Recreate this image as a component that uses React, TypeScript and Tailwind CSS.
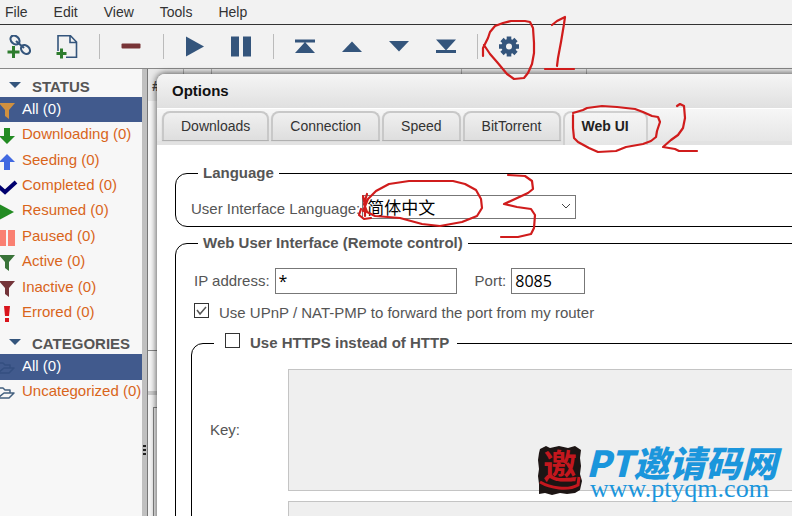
import type { ReactNode } from "react";

const NAVY = "#34557c";

function Glyph({ children }: { children: ReactNode }) {
  return (
    <svg viewBox="0 0 24 24" className="size-6" aria-hidden="true">
      {children}
    </svg>
  );
}

const toolGroups: { label: string; icon: ReactNode }[][] = [
  [
    {
      label: "Add torrent link",
      icon: (
        <Glyph>
          <g fill="none" stroke={NAVY} strokeWidth="2.2">
            <ellipse cx="8" cy="5" rx="5" ry="3.8" transform="rotate(45 8 5)" />
            <ellipse cx="18.5" cy="14.5" rx="5" ry="3.8" transform="rotate(45 18.5 14.5)" />
            <path d="M9 6l8 7" />
          </g>
          <path d="M0.5 17h12M6.5 11v12" stroke="#2e7d2e" strokeWidth="3" />
        </Glyph>
      ),
    },
    {
      label: "Add torrent file",
      icon: (
        <Glyph>
          <path d="M3 16V.8h12.500L21.500 7v15.200H11M15 1V7.500h6.500" fill="none" stroke={NAVY} strokeWidth="1.600" />
          <path d="M1.500 18.500h10M6.500 13.500v10" stroke="#2e7d2e" strokeWidth="3" />
        </Glyph>
      ),
    },
  ],
  [{ label: "Delete", icon: <Glyph><rect x="2.500" y="8.500" width="19" height="5" rx="1" fill="#783437" /></Glyph> }],
  [
    { label: "Resume", icon: <Glyph><path d="M3 1.500l18 10-18 10z" fill={NAVY} /></Glyph> },
    { label: "Pause", icon: <Glyph><path d="M2 1.500h8v20H2zM14 1.500h8v20h-8z" fill={NAVY} /></Glyph> },
  ],
  [
    { label: "Top", icon: <Glyph><path d="M2 4.500h20v3H2zM12 7l10 11H2z" fill={NAVY} /></Glyph> },
    { label: "Up", icon: <Glyph><path d="M12 6.500l10 10.500H2z" fill={NAVY} /></Glyph> },
    { label: "Down", icon: <Glyph><path d="M12 16.500l10-10.500H2z" fill={NAVY} /></Glyph> },
    { label: "Bottom", icon: <Glyph><path d="M2 4.500h20L12 15.500zM2 15h20v3H2z" fill={NAVY} /></Glyph> },
  ],
  [
    {
      label: "Options",
      icon: (
        <Glyph>
          <circle cx="12" cy="11.500" r="5.300" fill="none" stroke={NAVY} strokeWidth="4.600" />
          <path
            d="M12 1.500v4M12 17.500v4M2 11.500h4M18 11.500h4M5 4.500l3 3M16 15.500l3 3M5 18.500l3-3M16 7.500l3-3"
            stroke={NAVY}
            strokeWidth="4.600"
          />
        </Glyph>
      ),
    },
  ],
];

const groupClass = [
  "pl-[7px] pr-5 gap-6",
  "pl-[19px] pr-5",
  "pl-[19px] pr-5 gap-[22px]",
  "px-[19px] gap-[23px]",
  "px-[19px]",
];

const funnel = "M0 0h16l-6 7v9l-4-3V7z";

const statuses: { name: string; icon: ReactNode }[] = [
  { name: "All", icon: <path d={funnel} fill="#d0903f" /> },
  { name: "Downloading", icon: <path d="M5 0h6v8h5l-8 8-8-8h5z" fill="#228b22" /> },
  { name: "Seeding", icon: <path d="M5 16h6V8h5L8 0 0 8h5z" fill="#4169e1" /> },
  { name: "Completed", icon: <path d="M-1 7l7 6L17 3" fill="none" stroke="#00006e" strokeWidth="4" /> },
  { name: "Resumed", icon: <path d="M0 0l15 8-15 8z" fill="#228b22" /> },
  { name: "Paused", icon: <path d="M0 0h7v16H0zM9 0h7v16H9z" fill="#fa8072" /> },
  { name: "Active", icon: <path d={funnel} fill="#397339" /> },
  { name: "Inactive", icon: <path d={funnel} fill="#733439" /> },
  { name: "Errored", icon: <path d="M5 0h6l-1 10H6zM6 12h4v4H6z" fill="#d9141c" /> },
];

function folder(color: string) {
  return (
    <path
      d="M-3 13V3h7l2 2h5v3M-1 13h11l5-5H5l-6 5z"
      fill="none"
      stroke={color}
      strokeWidth="1.500"
      strokeLinejoin="round"
    />
  );
}

const categories = [
  { name: "All", icon: folder("#344f80") },
  { name: "Uncategorized", icon: folder("#43607f") },
];

function FilterList({ title, items, className }: {
  title: string;
  items: { name: string; icon: ReactNode }[];
  className: string;
}) {
  return (
    <section>
      <h2 className="flex h-7 items-center gap-[11px] pt-2 pl-[9px] font-bold text-[#555]">
        <svg viewBox="0 0 12 6" className="mb-1 h-[6px] w-3" aria-hidden="true">
          <path d="M0 0h12L6 6z" fill={NAVY} />
        </svg>
        {title}
      </h2>
      <ul className={`flex flex-col ${className}`}>
        {items.map((item, i) => (
          <li key={item.name} className={`flex flex-1 ${i === 0 ? "bg-[#415a8d] text-white" : "text-[#d9651b]"}`}>
            <a href="#" className="flex items-center gap-[7px] pb-[2px] whitespace-nowrap">
              <svg viewBox="1 0 15 16" className="mt-1 h-4 w-[15px] shrink-0 overflow-visible" aria-hidden="true">
                {item.icon}
              </svg>
              {item.name} (0)
            </a>
          </li>
        ))}
      </ul>
    </section>
  );
}

function Group({ legend, className, children }: { legend: ReactNode; className: string; children: ReactNode }) {
  return (
    <fieldset className={`rounded-xl border border-black ${className}`}>
      <legend className="flex items-center px-[5px] font-bold">{legend}</legend>
      {children}
    </fieldset>
  );
}

function OptionsWindow() {
  const tabs = ["Downloads", "Connection", "Speed", "BitTorrent", "Web UI"];
  return (
    <div
      role="dialog"
      aria-label="Options"
      className="absolute top-[5px] -right-16 -bottom-16 left-[157px] flex flex-col overflow-hidden rounded-tl-lg bg-white shadow-[0_0_6px_1px_rgba(0,0,0,0.6)]"
    >
      <h1 className="h-[34px] shrink-0 bg-linear-to-b from-[#f5f5f5] to-[#e0e0e0] pt-[6px] pl-[15px] leading-[22px] font-bold text-[#111]">
        Options
      </h1>
      <div
        role="tablist"
        className="flex h-[37px] shrink-0 items-start gap-[2px] border-t border-b-4 border-t-white border-b-[#e2e2e2] bg-linear-to-b from-[#f6f6f6] to-[#e6e6e6] pt-[2px] pl-[5px] text-sm text-[#333]"
      >
        {tabs.map((tab) => {
          const active = tab === "Web UI";
          return (
            <button
              key={tab}
              role="tab"
              aria-selected={active}
              className={`rounded-t-lg border-2 border-b-0 px-[17px] whitespace-nowrap ${
                active
                  ? "h-[34px] border-[#d0d0d0] bg-linear-to-b from-[#f5f5f5] to-[#e6e6e6] pb-[6px] font-bold text-[#222]"
                  : "h-[29px] border-[#c8c8c8] bg-linear-to-b from-[#f0f0f0] to-[#dedede] pb-px shadow-[0_1px_1px_#aaa]"
              }`}
            >
              {tab}
            </button>
          );
        })}
      </div>
      <form className="flex grow flex-col gap-[6px] px-[18px] pt-[18px] text-[#555]">
        <Group className="pb-[7px] pl-[15px] *:first:ml-[7px]" legend="Language">
          <div className="flex h-9 items-end gap-[2px]">
            <label htmlFor="language">User Interface Language:</label>
            <span className="relative flex h-6 w-[214px]">
              <select
                id="language"
                className="w-full appearance-none border border-[#777] bg-white pl-1 font-['Noto_Sans_CJK_SC',sans-serif] text-[17px] leading-[22px] text-black"
              >
                <option>简体中文</option>
              </select>
              <svg viewBox="0 0 10 6" className="absolute top-[9px] right-[5px] h-[6px] w-[10px]" aria-hidden="true">
                <path d="M1 0l4 4 4-4" fill="none" stroke="#444" />
              </svg>
            </span>
          </div>
        </Group>
        <Group className="grow pr-[10px] pl-[15px] *:first:ml-[7px]" legend="Web User Interface (Remote control)">
          <div className="mt-[15px] ml-[3px] flex items-center">
            <label htmlFor="address">IP address:</label>
            <input
              id="address"
              defaultValue="*"
              className="ml-[5px] h-[26px] w-[182px] border border-[#777] px-[3px] font-['Open_Sans',sans-serif] text-base text-black"
            />
            <label htmlFor="port" className="ml-[18px]">Port:</label>
            <input
              id="port"
              defaultValue="8085"
              className="ml-[5px] h-[26px] w-[74px] border border-[#777] px-[3px] font-['Open_Sans',sans-serif] text-base text-black"
            />
          </div>
          <label className="mt-2 ml-[3px] flex h-[22px] items-center gap-[10px]">
            <Tick checked />
            Use UPnP / NAT-PMP to forward the port from my router
          </label>
          <Group
            className="mt-[9px] h-[400px] *:first:ml-[22px]"
            legend={
              <label className="flex items-center gap-[10px] pl-[6px] pr-[3px]">
                <Tick />
                Use HTTPS instead of HTTP
              </label>
            }
          >
            <div className="mt-4 ml-[18px] grid grid-cols-[78px_1fr] items-center gap-y-[10px]">
              <label htmlFor="key">Key:</label>
              <textarea id="key" disabled className="h-[122px] resize-none border border-[#c4c4c4] bg-[#efefef]" />
              <span />
              <textarea aria-label="Certificate" disabled className="h-[122px] resize-none border border-[#c4c4c4] bg-[#efefef]" />
            </div>
          </Group>
        </Group>
      </form>
    </div>
  );
}

function Tick({ checked = false }: { checked?: boolean }) {
  return (
    <span className="relative mb-[5px] flex size-[15px]">
      <input type="checkbox" defaultChecked={checked} className="peer size-[15px] appearance-none border border-[#333] bg-white" />
      <svg viewBox="0 0 15 15" className="pointer-events-none absolute inset-0 hidden peer-checked:block" aria-hidden="true">
        <path d="M3 7l3 4 6-7" fill="none" stroke="#555" strokeWidth="1.500" />
      </svg>
    </span>
  );
}

function Marks() {
  return (
    <svg
      viewBox="0 0 792 516"
      className="pointer-events-none absolute top-0 left-0 h-[516px] w-[792px]"
      fill="none"
      stroke="#d01c1c"
      strokeWidth="2.200"
      strokeLinecap="round"
      strokeLinejoin="round"
      aria-hidden="true"
    >
      <path d="M483 56v-8l5-10 2-6 5-6 8-3 8-2h14l5 1 3 6 1 15v10l-2 11-4 9-4 5-10 1-7-5-10-12-7-8-6-9" />
      <path d="M552 25l5-4 8-4-1 7-3 18-3 16-1 8M545 69h29" />
      <path d="M573 113l10-3 4-2 15-2 15 1 18 2 8 3 9 4 6 1 2 5-3 9-1 6-5 4-8 3-17 3-10 4-18 1-9-4-11-6-4-4-1-10 0-13" />
      <path d="M677 106l3-2 4 2 1 12-2 10-5 7-7 5-8 7 12 2 4 2 18 0" />
      <path d="M363 196l2 10 0 10M361 209l-2 6 5 4 7-1M363 211l5-12 8-8 13-7 20-3h44l12 3 11 6 5 9 1 9-5 8-15 6-22 4-18-2-22-6-25-2-8-4-3-8 3-10" />
      <path d="M508 175l17 1 7 5 1 8-5 4-24 11 13 3 14 2 4 6-1 13-3 6-13 3h-17" />
    </svg>
  );
}

function Watermark() {
  return (
    <div className="pointer-events-none absolute top-[445px] left-[538px] flex gap-1 text-[#1b96dc]">
      <svg viewBox="0 0 44 52" className="h-[52px] w-11" aria-hidden="true">
        <path
          d="M2 4l6-3 4 2 9-2 9 2 7-2 6 4-1 8 1 8-1 8 2 7-2 9-5 3-8 1-7-1-8 2-7-2-6 1 0-10-1-8 1-7-1-9 1-7z"
          fill="#1d1514"
        />
        <path d="M2 37c10 6 28 9 38 3l1-8" fill="none" stroke="#c4171e" strokeWidth="3" />
        <text x="22" y="34" textAnchor="middle" fill="#c4171e" className="font-['Noto_Sans_CJK_SC',sans-serif] text-[34px] font-bold">
          邀
        </text>
      </svg>
      <div className="whitespace-nowrap">
        <p className="font-['Noto_Sans_CJK_SC',sans-serif] text-[36px] leading-8 font-black italic">PT邀请码网</p>
        <p className="pl-1 font-['Liberation_Serif',serif] text-[26px] leading-6">www.ptyqm.com</p>
      </div>
    </div>
  );
}

export default function App() {
  return (
    <div className="relative flex h-screen flex-col overflow-hidden bg-[#f2f2f2] font-['Liberation_Sans',Arial,sans-serif] text-[15px] leading-5">
      <nav className="flex h-[25px] shrink-0 items-center gap-[26px] border-b border-[#333] pl-[5px] text-sm text-[#333]">
        {["File", "Edit", "View", "Tools", "Help"].map((item) => (
          <a key={item} href="#">{item}</a>
        ))}
      </nav>
      <div role="toolbar" className="flex h-11 shrink-0 items-center border-b border-[#888]">
        {toolGroups.map((group, i) => (
          <div key={i} className={`flex h-[25px] items-center ${i ? "border-l border-[#bbb]" : ""} ${groupClass[i]}`}>
            {group.map((tool) => (
              <button key={tool.label} aria-label={tool.label}>{tool.icon}</button>
            ))}
          </div>
        ))}
      </div>
      <main className="relative flex grow">
        <aside className="w-[142px] shrink-0 bg-[#f7f7f7]">
          <FilterList title="STATUS" items={statuses} className="h-[229px]" />
          <FilterList title="CATEGORIES" items={categories} className="h-[51px]" />
        </aside>
        <div
          role="separator"
          className="flex w-[6px] shrink-0 flex-col items-center justify-center gap-[2px] border-r border-[#777] bg-[#c0c0c0] pt-[314px]"
        >
          <span className="h-[2px] w-[3px] bg-[#222]" />
          <span className="h-[2px] w-[3px] bg-[#222]" />
          <span className="h-[2px] w-[3px] bg-[#222]" />
        </div>
        <div className="flex grow flex-col bg-[#f5f5f5]">
          <div className="grid h-8 shrink-0 grid-cols-[36px_28px_250px_125px_1fr] divide-x divide-[#aaa] bg-[#e8e8e8]">
            <span className="pt-[7px] pl-1 font-bold text-[#444]">#</span>
            <span />
            <span />
            <span />
            <span />
          </div>
          <div className="h-[250px] shrink-0 border-b border-[#888] bg-[#f8f8f8]" />
          <div className="mt-1 h-10 shrink-0 border-b-4 border-[#ccc]" />
          <div className="mt-3 ml-[5px] grow border-t border-l border-[#888]" />
        </div>
        <OptionsWindow />
      </main>
      <Marks />
      <Watermark />
    </div>
  );
}
